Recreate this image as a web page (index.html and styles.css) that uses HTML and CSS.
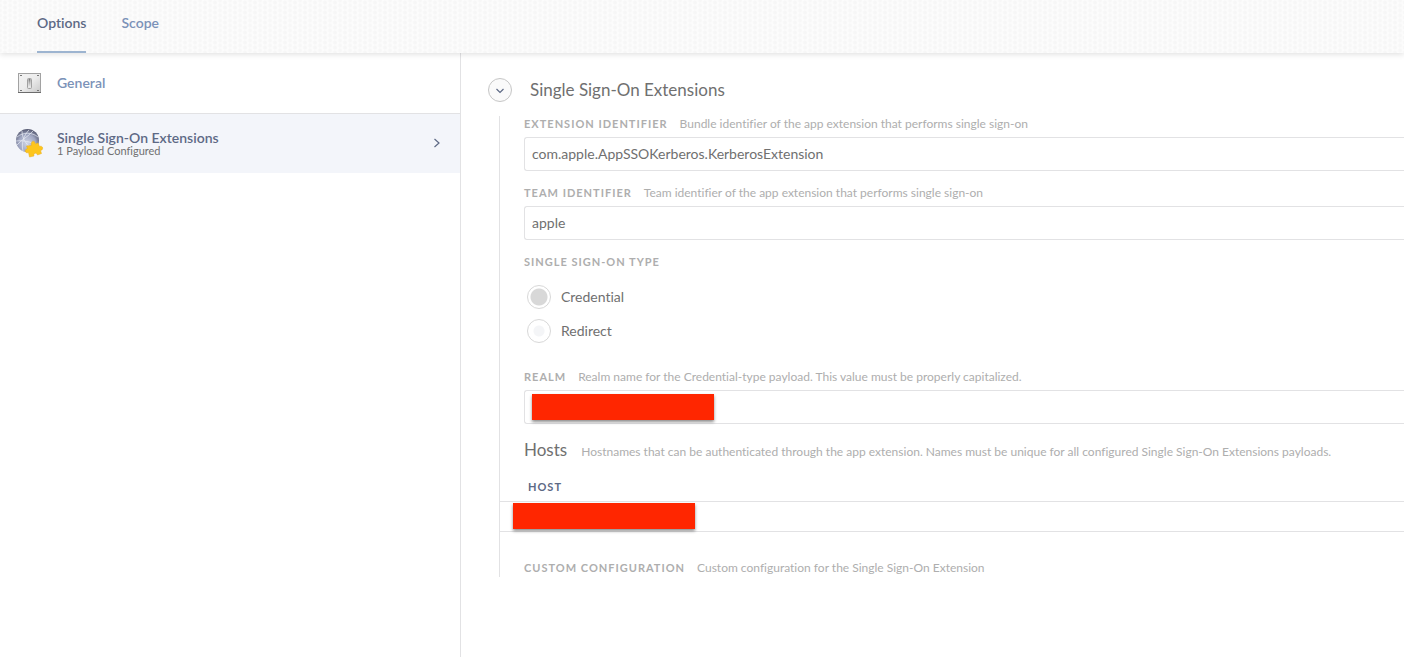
FILE: index.html
```
<!DOCTYPE html>
<html lang="en">
<head>
<meta charset="UTF-8">
<title>Single Sign-On Extensions</title>
<link rel="stylesheet" href="styles.css">
</head>
<body>

<nav class="tabs">
  <a class="tab active" href="#options">Options</a>
  <a class="tab" href="#scope">Scope</a>
</nav>

<div class="page">

  <nav class="sidebar">
    <a class="payload" href="#general">
      <svg class="payloadIcon" viewBox="0 0 30 30" aria-hidden="true">
        <defs>
          <linearGradient id="plate" x1="0" y1="0" x2="1" y2="1">
            <stop offset="0" stop-color="#f2f2f2"/>
            <stop offset="0.500" stop-color="#ececec"/>
            <stop offset="1" stop-color="#c8c8c8"/>
          </linearGradient>
          <linearGradient id="lever" x1="0" y1="0" x2="0" y2="1">
            <stop offset="0" stop-color="#777"/>
            <stop offset="0.400" stop-color="#aaa"/>
            <stop offset="1" stop-color="#eee"/>
          </linearGradient>
        </defs>
        <rect x="3.500" y="5.500" width="22" height="19" fill="url(#plate)" stroke="#a2a2a2"/>
        <path d="M3 24.500h23" stroke="#6c6c6c"/>
        <g fill="#777">
          <rect x="5" y="7" width="2" height="1"/><rect x="22" y="7" width="2" height="1"/>
          <rect x="5" y="22" width="2" height="1"/><rect x="22" y="22" width="2" height="1"/>
        </g>
        <rect x="12.500" y="10.500" width="4" height="10" rx="1" fill="#e4e4e4" stroke="#a0a0a0"/>
        <rect x="13.500" y="11" width="2" height="8" fill="url(#lever)"/>
      </svg>
      <span class="payloadText"><span class="payloadName">General</span></span>
    </a>
    <a class="payload selected" href="#sso">
      <svg class="payloadIcon" viewBox="0 0 30 30" aria-hidden="true">
        <defs>
          <radialGradient id="globe" cx="48%" cy="62%" r="62%">
            <stop offset="0" stop-color="#d0d6e6"/>
            <stop offset="0.600" stop-color="#a0a7c2"/>
            <stop offset="1" stop-color="#53576f"/>
          </radialGradient>
        </defs>
        <circle cx="12.500" cy="12.500" r="11.500" fill="url(#globe)"/>
        <path d="M2 9C8 4 17 4 23 9M2 17c5-6 11-8 16-14M7 3c0 8 5 15 12 19M14 2C9 7 6 15 8 23M1 13c7-1 15 1 22 4" fill="none" stroke="#e8ecf5" stroke-width="0.700"/>
        <path d="M16.500 17.500C15 12.500 20.500 11.500 20 16l3-1 1.500 3.500c3.500-1.500 4.500 3.500 1 4l1 3-4 1.500c-1-3-4.500-2-3.500 1l-4.500 1-1-4.500c-3.500 1.500-4.500-3-1-4l-1-2.500z" fill="#fdc51c" stroke="#e9ad1e" stroke-width="0.500"/>
      </svg>
      <span class="payloadText">
        <span class="payloadName">Single Sign-On Extensions</span>
        <span class="payloadCount">1 Payload Configured</span>
      </span>
      <svg class="arrow" viewBox="0 0 8 10" aria-hidden="true"><path d="M1.500 1L6 5L1.500 9"/></svg>
    </a>
  </nav>

  <main class="content">
    <header class="sectionHead">
      <button class="toggle" type="button" aria-label="Collapse section">
        <svg viewBox="0 0 10 6" aria-hidden="true"><path d="M1.500 1L5 4.500L8.500 1"/></svg>
      </button>
      <h1>Single Sign-On Extensions</h1>
    </header>

    <form class="section">
      <div class="field">
        <div class="fieldHead">
          <label for="extensionId">Extension Identifier</label>
          <span class="hint">Bundle identifier of the app extension that performs single sign-on</span>
        </div>
        <input type="text" id="extensionId" value="com.apple.AppSSOKerberos.KerberosExtension">
      </div>

      <div class="field">
        <div class="fieldHead">
          <label for="teamId">Team Identifier</label>
          <span class="hint">Team identifier of the app extension that performs single sign-on</span>
        </div>
        <input type="text" id="teamId" value="apple">
      </div>

      <fieldset class="choices">
        <legend>Single Sign-On Type</legend>
        <label class="choice"><input type="radio" name="ssoType" checked>Credential</label>
        <label class="choice"><input type="radio" name="ssoType">Redirect</label>
      </fieldset>

      <div class="field">
        <div class="fieldHead">
          <label for="realm">Realm</label>
          <span class="hint">Realm name for the Credential-type payload. This value must be properly capitalized.</span>
        </div>
        <div class="masked">
          <input type="text" id="realm">
          <span class="redacted"></span>
        </div>
      </div>

      <div class="hostsHead">
        <h2>Hosts</h2>
        <span class="hint">Hostnames that can be authenticated through the app extension. Names must be unique for all configured Single Sign-On Extensions payloads.</span>
      </div>
      <table class="hosts">
        <thead>
          <tr><th>Host</th></tr>
        </thead>
        <tbody>
          <tr><td><div class="redacted"></div></td></tr>
        </tbody>
      </table>

      <div class="fieldHead">
        <span class="caption">Custom Configuration</span>
        <span class="hint">Custom configuration for the Single Sign-On Extension</span>
      </div>
    </form>
  </main>

</div>

</body>
</html>
```
FILE: styles.css
```
:root { --line: #e2e2e4; --text: #707070; --muted: #aeaeae; --link: #7b92b8; --navy: #5d6985; }

* { box-sizing: border-box; }

body { margin: 0; min-height: 100vh; display: flex; flex-direction: column;
       background: #fff; color: var(--text);
       font: 14px/16px Lato, "Liberation Sans", sans-serif;
       font-variant-ligatures: none; }

a { text-decoration: none; }

/* Tabs */
.tabs { position: relative; display: flex; gap: 35px; height: 53px; padding: 0 37px;
        background-color: #fdfdfd;
        background-image: radial-gradient(circle, #f6f6f6 1px, transparent 3px),
                          radial-gradient(circle, #f7f7f7 1px, transparent 3px);
        background-size: 10px 5px;
        background-position: 0 0, 5px 3px;
        box-shadow: 0 1px 6px rgba(0, 0, 0, 0.14); }
.tab { padding-top: 15px; border-bottom: 2px solid transparent; color: var(--link); font-weight: 600; }
.tab.active { color: var(--navy); border-bottom-color: #9db4d0; }

.page { display: flex; flex: 1; }

/* Payload list */
.sidebar { flex: 0 0 461px; border-right: 1px solid var(--line); }
.payload { display: flex; align-items: center; height: 60px; padding: 0 19px 0 15px; color: var(--link); }
.payload.selected { padding-bottom: 2px; background: #f3f5fa; border-top: 1px solid var(--line); color: var(--navy); }
.payloadIcon { width: 30px; height: 30px; margin-right: 12px; }
.payloadText { flex: 1; }
.payloadName { display: block; font-weight: 600; }
.payloadCount { display: block; font-size: 11px; line-height: 10px; color: var(--text); }
.arrow { width: 8px; height: 10px; fill: none; stroke: var(--navy); stroke-width: 1.2; }

/* Payload settings */
.content { flex: 1; min-width: 0; padding: 25px 0 0 27px; overflow: hidden; }
.sectionHead { display: flex; align-items: center; gap: 18px; height: 24px; margin-bottom: 14px; }
.toggle { display: flex; align-items: center; justify-content: center; width: 24px; height: 24px; padding: 2px 0 0;
          border: 1px solid #c6c6c6; border-radius: 50%; background: #fafafa; }
.toggle svg { width: 10px; height: 6px; fill: none; stroke: var(--navy); stroke-width: 1.2; }
h1, h2 { margin: 0; font-size: 17px; line-height: 24px; font-weight: 400; }

.section { margin-left: 11px; padding: 0 0 1px 24px; border-left: 1px solid var(--line); }
.field { margin-bottom: 14px; }
.fieldHead { display: flex; gap: 12px; margin-bottom: 5px; white-space: nowrap; }
.fieldHead:last-child { margin-bottom: 0; }
.fieldHead label, .caption, legend, th { font-size: 11px; line-height: 16px; font-weight: 700; letter-spacing: 1px;
                                         text-transform: uppercase; color: var(--muted); }
.hint { font-size: 12px; color: var(--muted); white-space: nowrap; }

input[type=text] { display: block; width: 100%; height: 34px; padding: 0 7px 2px;
                   border: 1px solid var(--line); border-right: none; border-radius: 3px 0 0 3px;
                   background: #fff; color: var(--text); font: inherit; }

.choices { margin: 0 0 26px; padding: 0; border: none; }
legend { padding: 0; margin-bottom: 15px; }
.choice { display: flex; align-items: center; gap: 10px; margin-left: 3px; }
.choice + .choice { margin-top: 10px; }
input[type=radio] { appearance: none; width: 24px; height: 24px; margin: 0;
                    border: 1px solid #d8d8d8; border-radius: 50%;
                    background: radial-gradient(circle, #f4f5f7 5px, #fff 6px); }
input[type=radio]:checked { background: radial-gradient(circle, #d8d8d8 8px, #fff 9px); }

.redacted { width: 182px; height: 26px; background: #ff2600; box-shadow: 0 2px 3px rgba(0, 0, 0, 0.45); }
.masked { position: relative; }
.masked .redacted { position: absolute; left: 8px; top: 4px; }

.hostsHead { display: flex; align-items: baseline; gap: 14px; margin-bottom: 17px; }
.hosts { width: calc(100% + 24px); margin: 0 0 28px -24px; border-collapse: separate; border-spacing: 0; }
.hosts th { padding: 0 0 6px 28px; text-align: left; color: var(--navy); }
.hosts td { padding: 1px 0 2px 13px; border: solid var(--line); border-width: 1px 0; }
```
